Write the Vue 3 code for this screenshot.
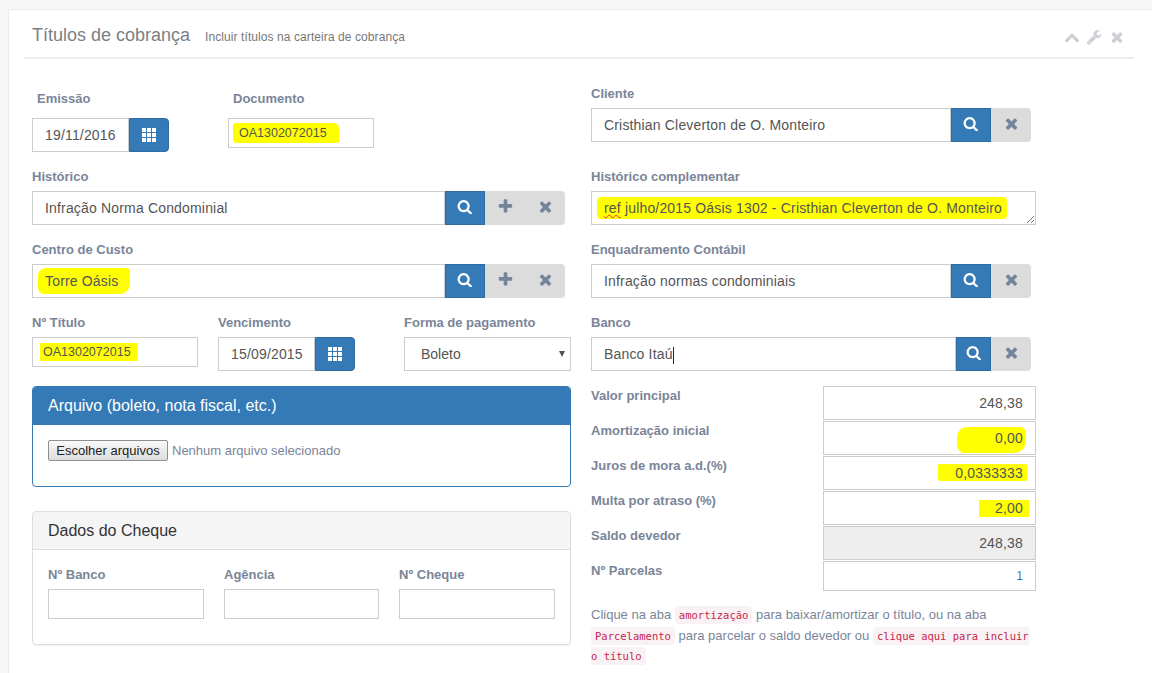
<script setup>
const icons = {
  search: "M1216 832q0-185-131.5-316.5t-316.5-131.5-316.5 131.5-131.5 316.5 131.5 316.5 316.5 131.5 316.5-131.5 131.5-316.5zm512 832q0 52-38 90t-90 38q-54 0-90-38l-343-342q-179 124-399 124-143 0-273.5-55.5t-225-150-150-225-55.5-273.5 55.5-273.5 150-225 225-150 273.5-55.5 273.5 55.5 225 150 150 225 55.5 273.5q0 220-124 399l343 343q37 37 37 90z",
  plus: "M1600 736v192q0 40-28 68t-68 28h-416v416q0 40-28 68t-68 28h-192q-40 0-68-28t-28-68v-416h-416q-40 0-68-28t-28-68v-192q0-40 28-68t68-28h416v-416q0-40 28-68t68-28h192q40 0 68 28t28 68v416h416q40 0 68 28t28 68z",
  times: "M1490 1322q0 40-28 68l-136 136q-28 28-68 28t-68-28l-294-294-294 294q-28 28-68 28t-68-28l-136-136q-28-28-28-68t28-68l294-294-294-294q-28-28-28-68t28-68l136-136q28-28 68-28t68 28l294 294 294-294q28-28 68-28t68 28l136 136q28 28 28 68t-28 68l-294 294 294 294q28 28 28 68z",
  up: "M1683 1331l-166 165q-19 19-45 19t-45-19l-531-531-531 531q-19 19-45 19t-45-19l-166-165q-19-19-19-45.5t19-45.5l742-741q19-19 45-19t45 19l742 741q19 19 19 45.5t-19 45.5z",
  wrench: "M448 1472q0-26-19-45t-45-19-45 19-19 45 19 45 45 19 45-19 19-45zm644-420l-682 682q-37 37-90 37-52 0-91-37l-106-108q-38-36-38-90 0-53 38-91l681-681q39 98 114.5 173.5t173.5 114.5zm634-435q0 39-23 106-47 134-164.5 217.5t-258.5 83.5q-185 0-316.5-131.5t-131.5-316.5 131.5-316.5 316.5-131.5q58 0 121.5 16.5t107.5 46.5q16 11 16 28t-16 28l-293 169v224l193 107q5-3 79-48.5t135.5-81 70.5-35.5q15 0 23.5 10t8.5 25z",
};

// linhas de valores da coluna direita
const valores = [
  { label: "Valor principal", value: "248,38" },
  { label: "Amortização inicial", value: "0,00", hl: "hl-a" },
  { label: "Juros de mora a.d.(%)", value: "0,0333333", hl: "hl-b" },
  { label: "Multa por atraso (%)", value: "2,00", hl: "hl-c" },
  { label: "Saldo devedor", value: "248,38", disabled: true },
  { label: "Nº Parcelas", value: "1", short: true },
];
</script>

<template>
  <div class="page">
    <section class="card">
      <header class="card-head">
        <h2 class="title">Títulos de cobrança</h2>
        <small class="subtitle">Incluir títulos na carteira de cobrança</small>
        <div class="tools">
          <svg class="tool" viewBox="0 0 1792 1792"><path :d="icons.up" /></svg>
          <svg class="tool" viewBox="0 0 1792 1792"><path :d="icons.wrench" /></svg>
          <svg class="tool" viewBox="0 0 1792 1792"><path :d="icons.times" /></svg>
        </div>
      </header>

      <div class="columns">
        <div class="col-left">
          <div class="row-top">
            <div class="field f-emissao">
              <label class="lbl lbl-top indent">Emissão</label>
              <div class="date">
                <div class="control date-input">19/11/2016</div>
                <button class="btn-cal">
                  <svg class="ic-th" viewBox="0 0 14 14"><path d="M0 0h4v4H0zM5 0h4v4H5zM10 0h4v4h-4zM0 5h4v4H0zM5 5h4v4H5zM10 5h4v4h-4zM0 10h4v4H0zM5 10h4v4H5zM10 10h4v4h-4z" /></svg>
                </button>
              </div>
            </div>
            <div class="field f-doc">
              <label class="lbl lbl-top indent">Documento</label>
              <div class="control small doc"><span class="hl hl-doc">OA1302072015</span></div>
            </div>
          </div>

          <div class="field">
            <label class="lbl">Histórico</label>
            <div class="group">
              <div class="control grow">Infração Norma Condominial</div>
              <button class="addon primary"><svg viewBox="0 0 1792 1792"><path :d="icons.search" /></svg></button>
              <button class="addon"><svg viewBox="0 0 1792 1792"><path :d="icons.plus" /></svg></button>
              <button class="addon last"><svg viewBox="0 0 1792 1792"><path :d="icons.times" /></svg></button>
            </div>
          </div>

          <div class="field">
            <label class="lbl">Centro de Custo</label>
            <div class="group">
              <div class="control grow"><span class="hl hl-torre">Torre Oásis</span></div>
              <button class="addon primary"><svg viewBox="0 0 1792 1792"><path :d="icons.search" /></svg></button>
              <button class="addon"><svg viewBox="0 0 1792 1792"><path :d="icons.plus" /></svg></button>
              <button class="addon last"><svg viewBox="0 0 1792 1792"><path :d="icons.times" /></svg></button>
            </div>
          </div>

          <div class="row-three">
            <div class="field f-titulo">
              <label class="lbl">Nº Título</label>
              <div class="control small titulo"><span class="hl hl-titulo">OA1302072015</span></div>
            </div>
            <div class="field f-venc">
              <label class="lbl">Vencimento</label>
              <div class="date">
                <div class="control date-input">15/09/2015</div>
                <button class="btn-cal">
                  <svg class="ic-th" viewBox="0 0 14 14"><path d="M0 0h4v4H0zM5 0h4v4H5zM10 0h4v4h-4zM0 5h4v4H0zM5 5h4v4H5zM10 5h4v4h-4zM0 10h4v4H0zM5 10h4v4H5zM10 10h4v4h-4z" /></svg>
                </button>
              </div>
            </div>
            <div class="field f-forma">
              <label class="lbl">Forma de pagamento</label>
              <div class="select-wrap">
                <select class="select">
                  <option>Boleto</option>
                </select>
              </div>
            </div>
          </div>

          <div class="panel panel-file">
            <div class="panel-head blue">Arquivo (boleto, nota fiscal, etc.)</div>
            <div class="panel-body file-row">
              <button class="file-btn">Escolher arquivos</button>
              <span class="file-none">Nenhum arquivo selecionado</span>
            </div>
          </div>

          <div class="panel panel-cheque">
            <div class="panel-head grey">Dados do Cheque</div>
            <div class="panel-body cheque-grid">
              <div class="field">
                <label class="lbl">Nº Banco</label>
                <input class="plain" type="text" />
              </div>
              <div class="field">
                <label class="lbl">Agência</label>
                <input class="plain" type="text" />
              </div>
              <div class="field">
                <label class="lbl">Nº Cheque</label>
                <input class="plain" type="text" />
              </div>
            </div>
          </div>
        </div>

        <div class="col-right">
          <div class="field f-cliente">
            <label class="lbl">Cliente</label>
            <div class="group narrow">
              <div class="control grow">Cristhian Cleverton de O. Monteiro</div>
              <button class="addon primary"><svg viewBox="0 0 1792 1792"><path :d="icons.search" /></svg></button>
              <button class="addon last"><svg viewBox="0 0 1792 1792"><path :d="icons.times" /></svg></button>
            </div>
          </div>

          <div class="field">
            <label class="lbl">Histórico complementar</label>
            <div class="control area">
              <span class="hl hl-ref"><span class="typo">ref</span> julho/2015 Oásis 1302 - Cristhian Cleverton de O. Monteiro</span>
              <svg class="grip" viewBox="0 0 7 7"><path d="M7 0 0 7M7 4 4 7" stroke="#777" stroke-width="1" fill="none" /></svg>
            </div>
          </div>

          <div class="field">
            <label class="lbl">Enquadramento Contábil</label>
            <div class="group narrow">
              <div class="control grow">Infração normas condominiais</div>
              <button class="addon primary"><svg viewBox="0 0 1792 1792"><path :d="icons.search" /></svg></button>
              <button class="addon last"><svg viewBox="0 0 1792 1792"><path :d="icons.times" /></svg></button>
            </div>
          </div>

          <div class="field f-banco">
            <label class="lbl">Banco</label>
            <div class="group narrow">
              <div class="control grow">Banco Itaú<i class="caret"></i></div>
              <button class="addon primary tight"><svg viewBox="0 0 1792 1792"><path :d="icons.search" /></svg></button>
              <button class="addon last"><svg viewBox="0 0 1792 1792"><path :d="icons.times" /></svg></button>
            </div>
          </div>

          <div class="values">
            <div v-for="v in valores" :key="v.label" class="value-row">
              <span class="lbl value-lbl">{{ v.label }}</span>
              <div class="control value" :class="{ disabled: v.disabled, short: v.short }">
                <span :class="v.hl ? ['hl', v.hl] : null">{{ v.value }}</span>
              </div>
            </div>
          </div>

          <p class="help">
            Clique na aba <code>amortização</code> para baixar/amortizar o título, ou na aba
            <code>Parcelamento</code> para parcelar o saldo devedor ou <code>clique aqui para incluir o título</code>
          </p>
        </div>
      </div>
    </section>
  </div>
</template>

<style>
html, body {
  margin: 0;
  background: #f6f6f6;
  overflow: hidden;
}
</style>

<style scoped>
.page {
  height: 673px;
  overflow: hidden;
  padding: 9px 0 0 8px;
  box-sizing: border-box;
  font-family: "Liberation Sans", Arial, sans-serif;
  font-size: 14px;
  color: #555;
}

.card {
  background: #fff;
  border: 1px solid #e9ebee;
  border-right: 0;
  border-bottom: 0;
  height: 100%;
  padding-left: 15px;
  padding-right: 18px;
}

.card-head {
  display: flex;
  align-items: baseline;
  height: 47px;
  box-sizing: content-box;
  border-bottom: 2px solid #e9ecf1;
  padding-left: 8px;
}

.title {
  margin: 0;
  font-size: 18px;
  font-weight: 400;
  line-height: 51px;
  color: #7a7f87;
}

.subtitle {
  margin-left: 15px;
  font-size: 12px;
  letter-spacing: 0.08px;
  color: #777;
}

.tools {
  margin-left: auto;
  display: flex;
  gap: 6.5px;
  align-self: center;
  margin-top: 6px;
  margin-right: 9.5px;
}

.tool {
  width: 16px;
  height: 16px;
  fill: #ccd0d4;
}

.columns {
  display: flex;
  gap: 20px;
  padding-left: 8px;
}

.col-left {
  width: 539px;
  padding-top: 31px;
  display: flex;
  flex-direction: column;
}

.col-right {
  width: 445px;
  padding-top: 26px;
  display: flex;
  flex-direction: column;
}

.field {
  display: flex;
  flex-direction: column;
  margin-bottom: 16px;
}

.f-cliente {
  margin-bottom: 26px;
}

.f-banco {
  margin-bottom: 15px;
}

.lbl {
  display: block;
  font-size: 13px;
  font-weight: 700;
  line-height: 18px;
  margin-bottom: 5px;
  color: #7a8599;
}

.lbl-top {
  margin-bottom: 10px;
}

.indent {
  padding-left: 5px;
}

.row-top,
.row-three {
  display: flex;
}

.f-emissao {
  width: 196px;
}

.f-doc {
  width: 146px;
}

.f-titulo {
  width: 186px;
}

.f-venc {
  width: 186px;
}

.f-forma {
  width: 167px;
  margin-bottom: 15px;
}

.f-titulo,
.f-venc {
  margin-bottom: 15px;
}

.titulo {
  width: 166px;
}

.control {
  box-sizing: border-box;
  height: 34px;
  line-height: 32px;
  border: 1px solid #ccc;
  background: #fff;
  padding: 0 12px;
  position: relative;
  white-space: nowrap;
  letter-spacing: 0.17px;
}

.control.small {
  height: 30px;
  line-height: 28px;
  font-size: 12.5px;
  letter-spacing: 0;
  padding: 0 10px;
}

.grow {
  flex: 1;
  min-width: 0;
}

.group {
  display: flex;
  width: 533px;
}

.group.narrow {
  width: 440px;
}

.addon {
  width: 40px;
  height: 34px;
  padding: 0 0 3px;
  border: 0;
  background: #dcdcdc;
  display: flex;
  align-items: center;
  justify-content: center;
}

.addon svg {
  width: 17px;
  height: 17px;
  fill: #74859b;
}

.addon.primary {
  background: #337ab7;
  box-shadow: inset 0 0 0 1px #2e6da4;
}

.addon.primary svg {
  width: 15.5px;
  height: 15.5px;
  fill: #fff;
}

.addon.tight {
  width: 35px;
}

.addon.last {
  border-radius: 0 4px 4px 0;
}

.date {
  display: flex;
}

.date-input {
  width: 97px;
  padding: 0 0 0 12px;
}

.btn-cal {
  width: 40px;
  height: 34px;
  padding: 0;
  background: #337ab7;
  border: 1px solid #2e6da4;
  border-radius: 0 4px 4px 0;
  display: flex;
  align-items: center;
  justify-content: center;
}

.ic-th {
  width: 14px;
  height: 14px;
  fill: #fff;
}

.select-wrap {
  position: relative;
}

.select-wrap::after {
  content: "";
  position: absolute;
  right: 6px;
  top: 14px;
  border-left: 3.5px solid transparent;
  border-right: 3.5px solid transparent;
  border-top: 6px solid #555;
  pointer-events: none;
}

.select {
  box-sizing: border-box;
  width: 167px;
  height: 34px;
  appearance: none;
  background: #fff;
  border: 1px solid #ccc;
  border-radius: 0;
  padding: 0 16px;
  font-family: inherit;
  font-size: 14px;
  color: #555;
}

.panel {
  border-radius: 4px;
  background: #fff;
}

.panel-file {
  border: 1px solid #337ab7;
  height: 101px;
  box-sizing: border-box;
  margin-bottom: 24px;
}

.panel-cheque {
  border: 1px solid #ddd;
  height: 134px;
  box-sizing: border-box;
  box-shadow: 0 1px 1px rgba(0, 0, 0, 0.05);
}

.panel-head {
  height: 38px;
  line-height: 37px;
  padding-left: 15px;
  font-size: 16px;
  box-sizing: border-box;
}

.panel-head.blue {
  background: #337ab7;
  color: #fff;
  border-radius: 3px 3px 0 0;
}

.panel-head.grey {
  background: #f5f5f5;
  color: #333;
  border-bottom: 1px solid #ddd;
  border-radius: 3px 3px 0 0;
}

.file-row {
  padding: 15px;
  display: flex;
  align-items: center;
  font-size: 13px;
}

.file-btn {
  box-sizing: border-box;
  width: 120px;
  height: 21px;
  padding: 0;
  font-family: inherit;
  font-size: 13px;
  color: #222;
  background: linear-gradient(#fafafa, #dcdcdc);
  border: 1px solid #8f8f8f;
  border-radius: 2px;
}

.file-none {
  margin-left: 4px;
  color: #7a8599;
}

.cheque-grid {
  display: grid;
  grid-template-columns: 156px 155px 156px;
  column-gap: 20px;
  padding: 16px 15px 0;
}

.plain {
  box-sizing: border-box;
  width: 100%;
  height: 30px;
  border: 1px solid #ccc;
  background: #fff;
  padding: 0 10px;
}

.area {
  width: 445px;
  padding-left: 12px;
}

.grip {
  position: absolute;
  right: 1px;
  bottom: 1px;
  width: 7px;
  height: 7px;
}

.typo {
  text-decoration: underline wavy #e33;
  text-decoration-thickness: 1px;
}

.caret {
  display: inline-block;
  width: 1px;
  height: 17px;
  background: #222;
  vertical-align: middle;
}

.hl {
  background: #ff0;
}

.hl-doc {
  padding: 3px 12px 3px 6px;
  margin-left: -6px;
  border-radius: 3px 5px 2px 4px;
}

.hl-torre {
  padding: 5px 12px 5px 7px;
  margin-left: -7px;
  border-radius: 8px 4px 10px 6px;
}

.hl-titulo {
  padding: 2px 7px 2px 3px;
  margin-left: -3px;
}

.hl-ref {
  padding: 3px 5px 3px 7px;
  margin-left: -7px;
  border-radius: 4px;
}

.hl-a {
  padding: 3px 3px 7px 38px;
  margin-right: -3px;
  border-radius: 10px 6px 12px 8px;
}

.hl-b {
  padding: 1px 4px 0 17px;
  margin-right: -4px;
  border-radius: 2px;
}

.hl-c {
  padding: 0 6px 1px 16px;
  margin-right: -6px;
}

.values {
  display: flex;
  flex-direction: column;
  gap: 1px;
}

.value-row {
  display: flex;
  justify-content: space-between;
}

.value-lbl {
  padding-top: 1px;
  margin-bottom: 0;
}

.value {
  width: 213px;
  text-align: right;
}

.value.disabled {
  background: #eee;
}

.value.short {
  height: 30px;
  line-height: 28px;
  color: #3a7ab5;
  font-size: 12px;
}

.help {
  margin: 14px 0 0;
  width: 440px;
  font-size: 13px;
  line-height: 19.6px;
  color: #7a8599;
}

code {
  font-family: "DejaVu Sans Mono", monospace;
  font-size: 10.5px;
  padding: 3px 4px;
  color: #c7254e;
  background: #f9f2f4;
  border-radius: 4px;
}
</style>
